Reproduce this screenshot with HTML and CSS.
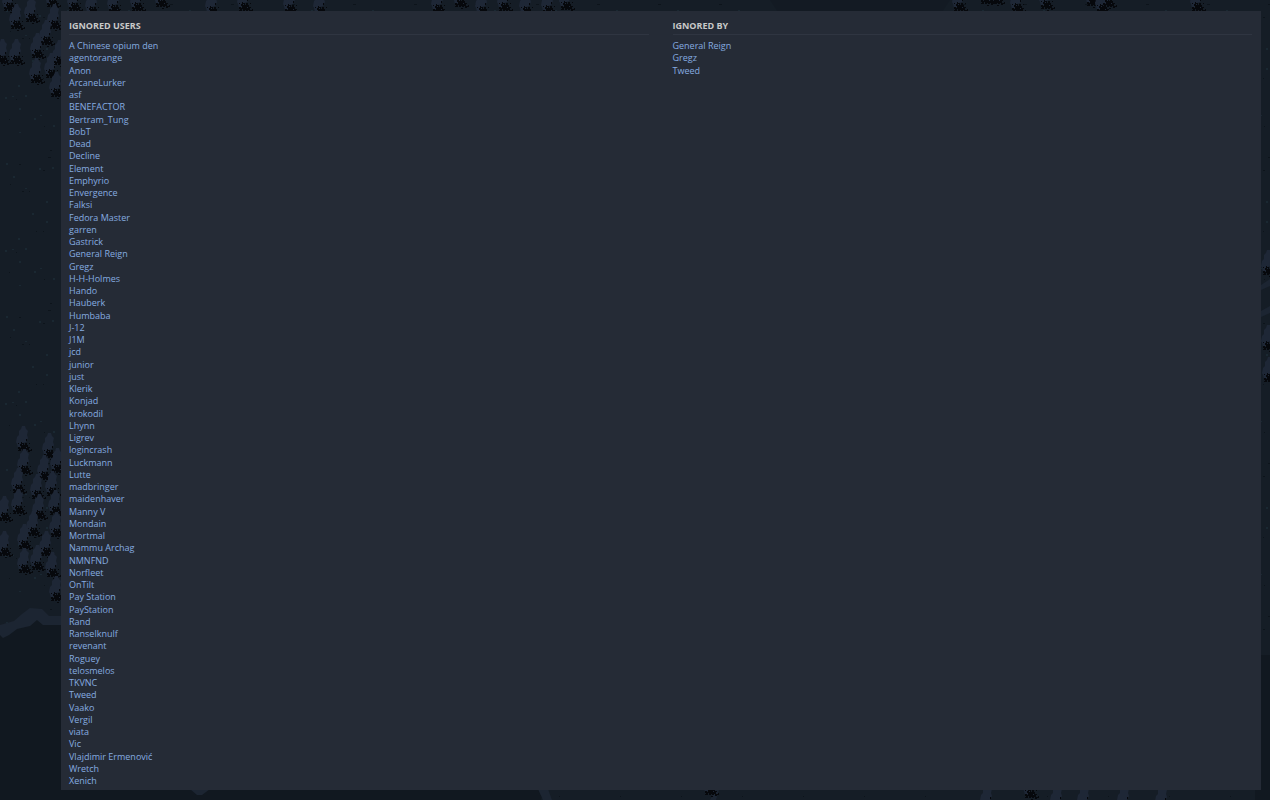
FILE: index.html
```
<!DOCTYPE html>
<html lang="en">
<head>
    <meta charset="UTF-8">
    <title>Ignored Users</title>
    <link rel="stylesheet" href="styles.css">
</head>
<body>
    <svg class="map" viewBox="0 0 1270 800" preserveAspectRatio="xMidYMid slice" aria-hidden="true">
        <defs>
            <pattern id="grass" width="61" height="153" patternUnits="userSpaceOnUse">
                <path fill="#1a2832" d="M6 10h2v2h-2zM13 23h2v2h-2zM25 35h2v1h-2zM39 15h2v2h-2zM32 60h2v2h-2zM46 68h2v2h-2zM18 85h2v2h-2zM5 97h2v2h-2zM12 96h2v1h-2zM25 95h2v2h-2zM19 108h2v2h-2zM34 118h2v2h-2zM40 115h2v1h-2zM53 125h2v2h-2zM19 132h2v1h-2zM46 48h2v2h-2zM52 14h2v2h-2z"/>
                <path fill="#0d141b" d="M19 11h2v1h-2zM43 17h2v1h-2zM10 31h1v1h-1zM22 38h2v1h-2zM29 38h1v1h-1zM36 78h1v1h-1zM43 78h1v1h-1zM9 119h1v1h-1zM16 99h1v1h-1zM44 126h1v1h-1zM48 4h3v1h-3zM50 150h2v1h-2z"/>
            </pattern>
            <g id="tree">
                <path fill="#1e2736" d="M1-14l3 0 1 3 2 2-1 4 1 3-2 4-3 1-1 4-4 1-1-4-1-2 1-5 2-2 0-4 2-2z"/>
                <path fill="#06080c" d="M0 2h1v1h2v2h1v-2h2v2h1v2h2v1h-1v2h2v-1h1v2h-2v1h-2v-2h-1v1h-2v-1h-1v1h-2v-2h-1v2h-3v-1h1v-1h-1v-2h2v1h1v-2h-1v-2h1zM5-1h1v2h-1zM8 3h1v1h-1zM-3 3h1v1h-1zM3 12h2v1h-2z"/>
                <path fill="#1e2736" d="M1 4h1v1h-1zM5 7h1v1h-1z"/>
            </g>
        </defs>
        <rect width="1270" height="800" fill="#151d26"/>
        <rect width="1270" height="800" fill="url(#grass)"/>
        <path fill="#111820" d="M0 632l12-5 14-5 9-6 8 4h30v180h-73zM60 785h484l-3 15h-481zM1255 655h15v145h-15z"/>
        <path fill="#131a23" d="M770 0h180l-8 12h-164z"/>
        <path fill="#1c2532" d="M0 625l14-4 8-7 8-6 12 1 7 7h14v9h-20l-6-5-7 6-13 3-8 6-6 3-3-3z"/>
        <path fill="#1c2532" d="M190 789h20l-8 6h-5zM538 789h10l4 11h-9zM710 800l5-10h4l-3 10zM1261 285l9-6v7l-9 4zM1261 311l9-5v7l-9 4z"/>
        <g>
            <use href="#tree" x="7" y="0"/><use href="#tree" x="14" y="18"/>
            <use href="#tree" x="29" y="11"/><use href="#tree" x="50" y="-4"/>
            <use href="#tree" x="52" y="18"/><use href="#tree" x="44" y="34"/>
            <use href="#tree" x="35" y="47"/><use href="#tree" x="14" y="53"/>
            <use href="#tree" x="0" y="53"/><use href="#tree" x="49" y="67"/>
            <use href="#tree" x="34" y="72"/><use href="#tree" x="54" y="86"/>
            <use href="#tree" x="57" y="54"/>
            <use href="#tree" x="21" y="440"/><use href="#tree" x="47" y="447"/>
            <use href="#tree" x="22" y="463"/><use href="#tree" x="42" y="469"/>
            <use href="#tree" x="55" y="462"/><use href="#tree" x="16" y="482"/>
            <use href="#tree" x="35" y="488"/><use href="#tree" x="50" y="485"/>
            <use href="#tree" x="2" y="510"/><use href="#tree" x="16" y="503"/>
            <use href="#tree" x="37" y="508"/><use href="#tree" x="53" y="504"/>
            <use href="#tree" x="31" y="525"/><use href="#tree" x="54" y="526"/>
            <use href="#tree" x="2" y="545"/><use href="#tree" x="22" y="538"/>
            <use href="#tree" x="44" y="545"/><use href="#tree" x="35" y="559"/>
            <use href="#tree" x="22" y="562"/><use href="#tree" x="50" y="566"/>
            <use href="#tree" x="54" y="590"/>
        </g>
        <g>
            <use href="#tree" x="72" y="0"/><use href="#tree" x="90" y="4"/>
            <use href="#tree" x="112" y="2"/><use href="#tree" x="135" y="0"/>
            <use href="#tree" x="159" y="-4"/><use href="#tree" x="210" y="4"/>
            <use href="#tree" x="242" y="0"/><use href="#tree" x="288" y="2"/>
            <use href="#tree" x="318" y="4"/><use href="#tree" x="436" y="2"/>
            <use href="#tree" x="458" y="-4"/><use href="#tree" x="480" y="4"/>
            <use href="#tree" x="502" y="0"/><use href="#tree" x="524" y="4"/>
            <use href="#tree" x="546" y="3"/><use href="#tree" x="564" y="-1"/>
            <use href="#tree" x="957" y="0"/><use href="#tree" x="984" y="-7"/>
            <use href="#tree" x="994" y="-7"/><use href="#tree" x="1015" y="1"/>
            <use href="#tree" x="1044" y="-2"/><use href="#tree" x="1090" y="-5"/>
            <use href="#tree" x="1100" y="2"/><use href="#tree" x="1106" y="-4"/>
            <use href="#tree" x="1195" y="0"/>
            <use href="#tree" x="1266" y="264"/><use href="#tree" x="1266" y="339"/>
            <use href="#tree" x="1267" y="371"/>
            <use href="#tree" x="708" y="784"/><use href="#tree" x="985" y="798"/>
            <use href="#tree" x="1028" y="787"/><use href="#tree" x="1055" y="798"/>
            <use href="#tree" x="1082" y="798"/><use href="#tree" x="1122" y="798"/>
            <use href="#tree" x="1160" y="799"/>
        </g>
    </svg>

    <main class="panel">
        <section class="column">
            <h2>Ignored Users</h2>
            <ul class="user-list">
                <li><a href="#">A Chinese opium den</a></li>
                <li><a href="#">agentorange</a></li>
                <li><a href="#">Anon</a></li>
                <li><a href="#">ArcaneLurker</a></li>
                <li><a href="#">asf</a></li>
                <li><a href="#">BENEFACTOR</a></li>
                <li><a href="#">Bertram_Tung</a></li>
                <li><a href="#">BobT</a></li>
                <li><a href="#">Dead</a></li>
                <li><a href="#">Decline</a></li>
                <li><a href="#">Element</a></li>
                <li><a href="#">Emphyrio</a></li>
                <li><a href="#">Envergence</a></li>
                <li><a href="#">Falksi</a></li>
                <li><a href="#">Fedora Master</a></li>
                <li><a href="#">garren</a></li>
                <li><a href="#">Gastrick</a></li>
                <li><a href="#">General Reign</a></li>
                <li><a href="#">Gregz</a></li>
                <li><a href="#">H-H-Holmes</a></li>
                <li><a href="#">Hando</a></li>
                <li><a href="#">Hauberk</a></li>
                <li><a href="#">Humbaba</a></li>
                <li><a href="#">J-12</a></li>
                <li><a href="#">J1M</a></li>
                <li><a href="#">jcd</a></li>
                <li><a href="#">junior</a></li>
                <li><a href="#">just</a></li>
                <li><a href="#">Klerik</a></li>
                <li><a href="#">Konjad</a></li>
                <li><a href="#">krokodil</a></li>
                <li><a href="#">Lhynn</a></li>
                <li><a href="#">Ligrev</a></li>
                <li><a href="#">logincrash</a></li>
                <li><a href="#">Luckmann</a></li>
                <li><a href="#">Lutte</a></li>
                <li><a href="#">madbringer</a></li>
                <li><a href="#">maidenhaver</a></li>
                <li><a href="#">Manny V</a></li>
                <li><a href="#">Mondain</a></li>
                <li><a href="#">Mortmal</a></li>
                <li><a href="#">Nammu Archag</a></li>
                <li><a href="#">NMNFND</a></li>
                <li><a href="#">Norfleet</a></li>
                <li><a href="#">OnTilt</a></li>
                <li><a href="#">Pay Station</a></li>
                <li><a href="#">PayStation</a></li>
                <li><a href="#">Rand</a></li>
                <li><a href="#">Ranselknulf</a></li>
                <li><a href="#">revenant</a></li>
                <li><a href="#">Roguey</a></li>
                <li><a href="#">telosmelos</a></li>
                <li><a href="#">TKVNC</a></li>
                <li><a href="#">Tweed</a></li>
                <li><a href="#">Vaako</a></li>
                <li><a href="#">Vergil</a></li>
                <li><a href="#">viata</a></li>
                <li><a href="#">Vic</a></li>
                <li><a href="#">Vlajdimir Ermenović</a></li>
                <li><a href="#">Wretch</a></li>
                <li><a href="#">Xenich</a></li>
            </ul>
        </section>

        <section class="column">
            <h2>Ignored By</h2>
            <ul class="user-list">
                <li><a href="#">General Reign</a></li>
                <li><a href="#">Gregz</a></li>
                <li><a href="#">Tweed</a></li>
            </ul>
        </section>
    </main>
</body>
</html>
```
FILE: styles.css
```
body {
    margin: 0;
    padding: 11px 9px 10px 61px;
    background: #151d26;
    color: #c8c8c8;
    font-family: "Open Sans", "Noto Sans", sans-serif;
    font-size: 9px;
    line-height: 1.362;
}

/* forest map behind the page */
.map {
    position: absolute;
    top: 0;
    left: 0;
    width: 100%;
    height: 100%;
    z-index: -1;
}

.panel {
    display: grid;
    grid-template-columns: 1fr 1fr;
    gap: 24px;
    padding: 8px 9px 3px 8px;
    background: #252b36;
}

h2 {
    margin: 0 0 5px;
    padding-bottom: 1px;
    border-bottom: 1px solid #2f3541;
    font-size: 9px;
    font-weight: 700;
    line-height: 14px;
    text-transform: uppercase;
}

.user-list {
    margin: 0;
    padding: 0;
    list-style: none;
}

a {
    color: #86abe0;
    text-decoration: none;
}

a:hover {
    text-decoration: underline;
}
```
